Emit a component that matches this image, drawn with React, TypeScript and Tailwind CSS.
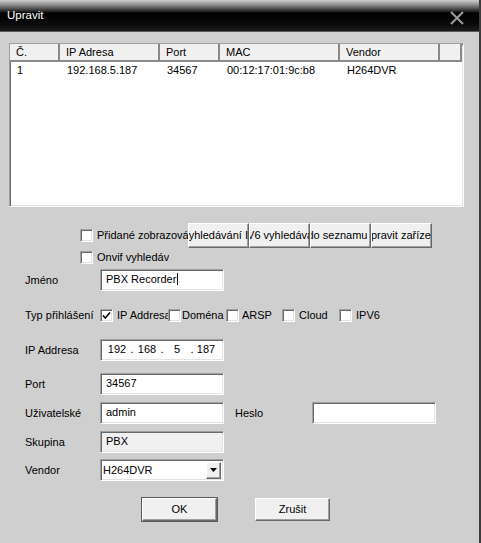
import React from 'react';

// Classic Win32-style edit dialog
const sunken =
  'border border-t-[#a0a0a0] border-l-[#a0a0a0] border-b-white border-r-white shadow-[inset_1px_1px_0_#696969,inset_-1px_-1px_0_#e3e3e3]';
const raised =
  'border border-t-white border-l-white border-b-[#696969] border-r-[#696969] shadow-[inset_-1px_-1px_0_#a0a0a0] bg-[#f0f0f0]';

function CheckBox({ checked = false }: { checked?: boolean }) {
  return (
    <div className={`w-[13px] h-[13px] shrink-0 bg-white flex items-center justify-center ${sunken}`}>
      {checked && (
        <svg width="9" height="9" viewBox="0 0 9 9">
          <path d="M1 4.5 L3.3 7 L8 1.5" fill="none" stroke="#000" strokeWidth="1.6" />
        </svg>
      )}
    </div>
  );
}

function Field({ children, disabled = false, className = '' }: { children?: React.ReactNode; disabled?: boolean; className?: string }) {
  return (
    <div
      className={`w-[124px] h-[22px] flex items-center pl-[5px] pb-[2px] ${disabled ? 'bg-[#f0f0f0]' : 'bg-white'} ${sunken} ${className}`}
    >
      {children}
    </div>
  );
}

function Row({ label, children, className = '' }: { label: string; children: React.ReactNode; className?: string }) {
  return (
    <div className={`flex items-center pl-[25px] ${className}`}>
      <div className="w-[75px] shrink-0">{label}</div>
      {children}
    </div>
  );
}

const columns = [
  { name: 'Č.', w: 'w-[50px]', value: '1' },
  { name: 'IP Adresa', w: 'w-[100px]', value: '192.168.5.187' },
  { name: 'Port', w: 'w-[60px]', value: '34567' },
  { name: 'MAC', w: 'w-[120px]', value: '00:12:17:01:9c:b8' },
  { name: 'Vendor', w: 'w-[100px]', value: 'H264DVR' },
];

const loginTypes = [
  { label: 'IP Addresa', w: 'w-[51px]', gap: 'ml-[4px]', checked: true },
  { label: 'Doména', w: 'w-[44px]', gap: 'ml-[1px]', checked: false },
  { label: 'ARSP', w: 'w-[40px]', gap: 'ml-[3px]', checked: false },
  { label: 'Cloud', w: 'w-[40px]', gap: 'ml-[4px]', checked: false },
  { label: 'IPV6', w: 'w-[40px]', gap: 'ml-[4px]', checked: false },
];

const toolButtons = ['Vyhledávání IP', 'IPV6 vyhledávání', 'do seznamu :', 'Upravit zařízení'];

export default function App() {
  return (
    <div className="w-[481px] h-[543px] bg-[#cfcfcf] text-black text-[11px] leading-none font-['Liberation_Sans',Arial,sans-serif] overflow-hidden flex flex-col border-r-2 border-r-[#3c3c3c]">
      {/* Title bar */}
      <div className="h-[32px] shrink-0 flex items-center justify-between pl-[7px] pr-[15px] border-b border-b-[#5a5a5a] bg-[linear-gradient(to_bottom,#cfcfcf_0px,#8a8a8a_5px,#2a2a2a_11px,#000_13px,#0a0a0a_24px,#1c1c1c_31px)]">
        <span className="text-white text-[11.5px] pt-[1px]">Upravit</span>
        <svg width="14" height="14" viewBox="0 0 14 14" className="mt-[4px]">
          <path d="M1 1 L13 13 M13 1 L1 13" stroke="#9c9c9c" strokeWidth="2" />
        </svg>
      </div>

      {/* Device list */}
      <div className={`ml-[9px] mt-[11px] w-[455px] h-[164px] shrink-0 bg-white flex flex-col ${sunken}`}>
        <div className="flex h-[18px] shrink-0">
          {columns.map((c) => (
            <div
              key={c.name}
              className={`${c.w} shrink-0 flex items-center pl-[6px] bg-[#f0f0f0] border-r-2 border-b-2 border-r-[#8a8a8a] border-b-[#8a8a8a]`}
            >
              {c.name}
            </div>
          ))}
          <div className="w-[22px] shrink-0 bg-[#f0f0f0] border-r-2 border-b-2 border-r-[#8a8a8a] border-b-[#8a8a8a]" />
        </div>
        <div className="flex h-[17px] items-center">
          {columns.map((c) => (
            <div key={c.name} className={`${c.w} shrink-0 pl-[7px]`}>
              {c.value}
            </div>
          ))}
        </div>
      </div>

      {/* Search options */}
      <div className="flex items-center pl-[80px] mt-[16px] h-[25px]">
        <CheckBox />
        <div className="ml-[4px] w-[91px] overflow-hidden whitespace-nowrap">Přidané zobrazování</div>
        {toolButtons.map((b) => (
          <div
            key={b}
            className={`w-[61px] h-[25px] shrink-0 overflow-hidden whitespace-nowrap flex items-center justify-center ${raised}`}
          >
            <span className="shrink-0">{b}</span>
          </div>
        ))}
      </div>
      <div className="flex items-center pl-[80px] mt-[3px] h-[13px]">
        <CheckBox />
        <div className="ml-[4px] w-[72px] overflow-hidden whitespace-nowrap">Onvif vyhledávání</div>
      </div>

      {/* Form */}
      <Row label="Jméno" className="mt-[5px]">
        <Field>
          <span>PBX Recorder</span>
          <span className="w-px h-[12px] bg-black ml-px" />
        </Field>
      </Row>

      <Row label="Typ přihlášení" className="mt-[18px] h-[13px]">
        <div className="flex items-center">
          {loginTypes.map((t) => (
            <div key={t.label} className="flex items-center">
              <CheckBox checked={t.checked} />
              <div className={`${t.gap} ${t.w} overflow-hidden whitespace-nowrap`}>{t.label}</div>
            </div>
          ))}
        </div>
      </Row>

      <Row label="IP Addresa" className="mt-[17px]">
        <div className={`w-[124px] h-[22px] flex items-center pl-[4px] pb-[1px] bg-white ${sunken}`}>
          <span className="w-[24px] text-center">192</span>
          <span className="w-[6px] text-center">.</span>
          <span className="w-[24px] text-center">168</span>
          <span className="w-[6px] text-center">.</span>
          <span className="w-[24px] text-center">5</span>
          <span className="w-[6px] text-center">.</span>
          <span className="w-[22px] text-center">187</span>
        </div>
      </Row>

      <Row label="Port" className="mt-[12px]">
        <Field>34567</Field>
      </Row>

      <Row label="Uživatelské" className="mt-[7px]">
        <Field>admin</Field>
        <div className="ml-[11px] w-[77px]">Heslo</div>
        <Field />
      </Row>

      <Row label="Skupina" className="mt-[7px]">
        <Field disabled>PBX</Field>
      </Row>

      <Row label="Vendor" className="mt-[6px]">
        <div className={`w-[124px] h-[22px] flex items-center justify-between pl-[2px] pr-[2px] bg-white ${sunken}`}>
          <span>H264DVR</span>
          <div className={`w-[15px] h-[17px] flex items-center justify-center ${raised}`}>
            <svg width="7" height="4" viewBox="0 0 7 4">
              <path d="M0 0 H7 L3.5 4 Z" fill="#000" />
            </svg>
          </div>
        </div>
      </Row>

      {/* Dialog buttons */}
      <div className="flex mt-[17px] pl-[142px]">
        <div className={`w-[75px] h-[23px] flex items-center justify-center outline outline-1 outline-[#5a5a5a] ${raised}`}>
          OK
        </div>
        <div className={`ml-[38px] w-[75px] h-[23px] flex items-center justify-center ${raised}`}>Zrušit</div>
      </div>
    </div>
  );
}
